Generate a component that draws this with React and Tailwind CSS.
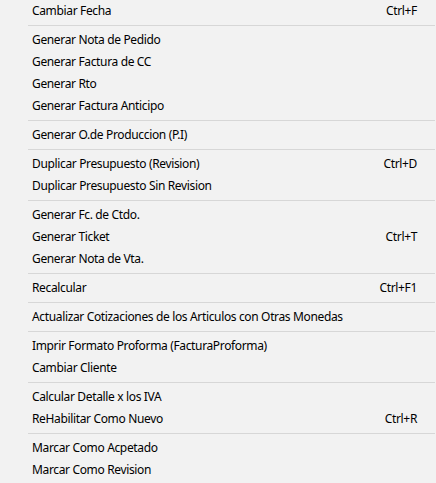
import React from "react";

const groups = [
  [["Cambiar Fecha", "Ctrl+F"]],
  [
    ["Generar Nota de Pedido"],
    ["Generar Factura de CC"],
    ["Generar Rto"],
    ["Generar Factura Anticipo"],
  ],
  [["Generar O.de Produccion (P.I)"]],
  [
    ["Duplicar Presupuesto (Revision)", "Ctrl+D"],
    ["Duplicar Presupuesto Sin Revision"],
  ],
  [
    ["Generar Fc. de Ctdo."],
    ["Generar Ticket", "Ctrl+T"],
    ["Generar Nota de Vta."],
  ],
  [["Recalcular", "Ctrl+F1"]],
  [["Actualizar Cotizaciones de los Articulos con Otras Monedas"]],
  [
    ["Imprir Formato Proforma (FacturaProforma)"],
    ["Cambiar Cliente"],
  ],
  [
    ["Calcular Detalle x los IVA"],
    ["ReHabilitar Como Nuevo", "Ctrl+R"],
  ],
  [["Marcar Como Acpetado"], ["Marcar Como Revision"]],
];

export default function App() {
  return (
    <div
      className="w-[436px] h-[483px] bg-[#f2f2f2] text-black text-[12px] tracking-[-0.35px] overflow-hidden"
      style={{ fontFamily: '"Segoe UI", "Noto Sans", sans-serif' }}
    >
      {groups.map((g, gi) => (
        <div key={gi}>
          {gi > 0 && (
            <div className="h-[7px] flex items-center pl-[28px] pr-[1px]">
              <div className="h-px w-full bg-[#d7d7d7]" />
            </div>
          )}
          {g.map(([label, sc], i) => (
            <div
              key={i}
              className="h-[22px] flex items-center justify-between pl-[32px] pr-[19px] leading-none"
            >
              <span>{label}</span>
              {sc && <span>{sc}</span>}
            </div>
          ))}
        </div>
      ))}
    </div>
  );
}
